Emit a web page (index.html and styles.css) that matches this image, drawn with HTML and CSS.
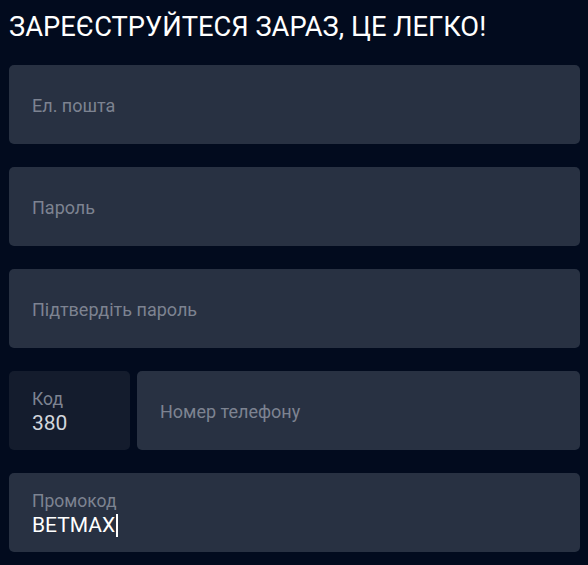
FILE: index.html
```html
<!DOCTYPE html>
<html lang="uk">
<head>
  <meta charset="UTF-8" />
  <meta name="viewport" content="width=device-width, initial-scale=1.0"/>
  <title>Реєстрація</title>
  <link rel="stylesheet" href="styles.css">
</head>
<body>
  <div class="register">
    <h1 class="title">ЗАРЕЄСТРУЙТЕСЯ ЗАРАЗ, ЦЕ ЛЕГКО!</h1>
    <form class="form">
      <div class="field">
        <span class="placeholder">Ел. пошта</span>
      </div>
      <div class="field">
        <span class="placeholder">Пароль</span>
      </div>
      <div class="field">
        <span class="placeholder">Підтвердіть пароль</span>
      </div>
      <div class="phone-row">
        <div class="field code">
          <span class="label">Код</span>
          <span class="value code-value">380</span>
        </div>
        <div class="field phone">
          <span class="placeholder">Номер телефону</span>
        </div>
      </div>
      <div class="field">
        <span class="label">Промокод</span>
        <span class="value">BETMAX<span class="caret"></span></span>
      </div>
    </form>
  </div>
</body>
</html>
```
FILE: styles.css
```css
html, body {
  margin: 0;
  background-color: #020b1e;
}

body {
  font-family: Roboto, "Noto Sans", sans-serif;
}

.register {
  padding: 9px 8px 0 9px;
}

.title {
  margin: 0;
  font-size: 27.3px;
  font-weight: 400;
  line-height: 36px;
  color: #ffffff;
}

.form {
  display: flex;
  flex-direction: column;
  gap: 23px;
  margin-top: 20px;
}

.field {
  display: flex;
  flex-direction: column;
  justify-content: center;
  box-sizing: border-box;
  height: 79px;
  padding: 2px 23px 0;
  background-color: #283142;
  border-radius: 5px;
}

.placeholder {
  font-size: 18px;
  color: #7d8391;
}

.label {
  font-size: 17.5px;
  line-height: 22px;
  color: #7d8391;
}

.value {
  font-size: 21px;
  line-height: 26px;
  color: #ffffff;
}

.code-value {
  color: #d3d6dc;
}

.caret {
  display: inline-block;
  width: 1.5px;
  height: 23px;
  margin-left: 1px;
  vertical-align: -5px;
  background-color: #ffffff;
}

.phone-row {
  display: flex;
  gap: 7px;
}

.code {
  width: 121px;
  flex-shrink: 0;
  background-color: #141c2d;
}

.phone {
  flex: 1;
}
```
